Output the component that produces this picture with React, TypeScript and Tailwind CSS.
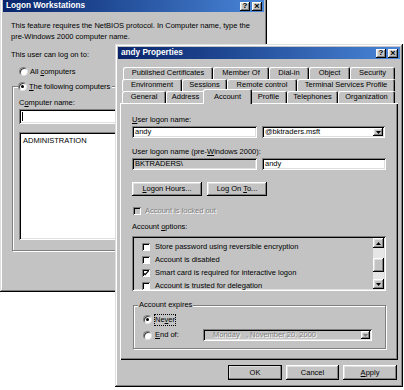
import React from 'react'

const raised = 'bg-[#c3c3c3] shadow-[inset_-1px_-1px_#000,inset_1px_1px_#fff,inset_-2px_-2px_#808080,inset_2px_2px_#dfdfdf]'
const sunken = 'shadow-[inset_1px_1px_#808080,inset_-1px_-1px_#fff,inset_2px_2px_#000,inset_-2px_-2px_#dfdfdf]'
const frame = 'bg-[#c3c3c3] shadow-[inset_-1px_-1px_#000,inset_1px_1px_#dfdfdf,inset_-2px_-2px_#808080,inset_2px_2px_#fff]'
const etched = 'border border-[#808080] shadow-[1px_1px_#fff,inset_1px_1px_#fff]'

const TitleBar = ({ title }: { title: string }) => (
    <div className="flex h-[12px] items-center bg-linear-to-r from-[#0a246a] to-[#4a86d8] pl-[3px] pr-[2px]">
        <span className="flex-1 text-[8.2px] font-bold leading-none text-white">{title}</span>
        <span className={`flex h-[9px] w-[10px] items-center justify-center text-[8px] font-bold leading-none text-black ${raised}`}>?</span>
        <span className={`ml-[2px] flex h-[9px] w-[10px] items-center justify-center text-[9px] font-bold leading-none text-black ${raised}`}>×</span>
    </div>
)

const Radio = ({ checked }: { checked?: boolean }) => (
    <span className="relative inline-block h-[9px] w-[9px] shrink-0 rounded-full border border-t-[#808080] border-l-[#808080] border-r-[#dfdfdf] border-b-[#dfdfdf] bg-white shadow-[inset_1px_1px_#404040]">
        {checked && <span className="absolute left-[2px] top-[2px] h-[3px] w-[3px] rounded-full bg-black" />}
    </span>
)

const Check = ({ checked, disabled }: { checked?: boolean; disabled?: boolean }) => (
    <span
        className={`flex h-[8px] w-[8px] shrink-0 items-center justify-center shadow-[inset_1px_1px_#808080,inset_-1px_-1px_#fff,inset_2px_2px_#000] ${disabled ? 'bg-[#c3c3c3]' : 'bg-white'}`}
    >
        {checked && (
            <svg width="6" height="6" viewBox="0 0 7 7">
                <path d="M0.5 3.5 L2.5 5.5 L6.5 1" stroke="#000" strokeWidth="1.4" fill="none" />
            </svg>
        )}
    </span>
)

const Arrow = ({ up }: { up?: boolean }) => (
    <svg width="5" height="3" viewBox="0 0 5 3">
        <path d={up ? 'M2.5 0 L5 3 L0 3 Z' : 'M0 0 L5 0 L2.5 3 Z'} fill="#000" />
    </svg>
)

const Tab = ({ label, w }: { label: React.ReactNode; w: string }) => (
    <div className={`flex h-[12px] items-center justify-center rounded-t-[2px] shadow-[inset_1px_1px_#fff,inset_-1px_0_#000,inset_-2px_0_#808080] ${w}`}>
        {label}
    </div>
)

const Btn = ({ children, w, def }: { children: React.ReactNode; w: string; def?: boolean }) => (
    <div className={`flex h-full items-center justify-center ${w} ${raised} ${def ? 'outline outline-1 outline-black -outline-offset-1' : ''}`}>
        {children}
    </div>
)

const LogonWorkstations = () => (
    <div className={`absolute left-0 top-[-3px] h-[295px] w-[267px] p-[3px] ${frame}`}>
        <TitleBar title="Logon Workstations" />
        <div className="pl-[8px] leading-[11px]">
            <p className="mt-[8px] whitespace-nowrap">
                This feature requires the NetBIOS protocol. In Computer name, type the
                <br />
                pre-Windows 2000 computer name.
            </p>
            <p className="mt-[7px]">This user can log on to:</p>
            <div className="mt-[6px] flex h-[11px] items-center gap-[2px] pl-[8px]">
                <Radio />
                <span>
                    All <u>c</u>omputers
                </span>
            </div>
            <div className={`relative ml-[1px] mt-[9px] h-[165px] w-[240px] pl-[6px] pt-[10px] ${etched}`}>
                <div className="absolute left-[5px] top-[-6px] flex h-[11px] items-center gap-[2px] bg-[#c3c3c3] pr-[2px]">
                    <Radio checked />
                    <span>
                        <u>T</u>he following computers
                    </span>
                </div>
                <p>
                    C<u>o</u>mputer name:
                </p>
                <div className={`mt-[1px] flex h-[15px] w-[220px] items-center bg-white pl-[3px] ${sunken}`}>
                    <span className="h-[9px] w-px bg-black" />
                </div>
                <div className={`mt-[8px] h-[108px] w-[220px] bg-white pl-[4px] pt-[3px] ${sunken}`}>ADMINISTRATION</div>
            </div>
        </div>
    </div>
)

const options = [
    { label: 'Store password using reversible encryption', checked: false },
    { label: 'Account is disabled', checked: false },
    { label: 'Smart card is required for interactive logon', checked: true },
    { label: 'Account is trusted for delegation', checked: false },
]

const AndyProperties = () => (
    <div className={`absolute left-[115px] top-[44px] flex h-[343px] w-[288px] flex-col p-[3px] ${frame}`}>
        <TitleBar title="andy Properties" />

        {/* tab rows */}
        <div className="mt-[8px] flex pl-[5px]">
            <Tab w="w-[90px]" label="Published Certificates" />
            <Tab w="w-[56px]" label="Member Of" />
            <Tab w="w-[40px]" label="Dial-in" />
            <Tab w="w-[41px]" label="Object" />
            <Tab w="w-[45px]" label="Security" />
        </div>
        <div className="flex pl-[4px]">
            <Tab w="w-[60px]" label="Environment" />
            <Tab w="w-[45px]" label="Sessions" />
            <Tab w="w-[70px]" label="Remote control" />
            <Tab w="w-[98px]" label="Terminal Services Profile" />
        </div>
        <div className="flex h-[12px] items-start pl-[4px]">
            <Tab w="w-[44px]" label="General" />
            <Tab w="w-[39px]" label="Address" />
            <div className="relative z-10 -mx-[2px] -mt-[2px] flex h-[15px] w-[49px] items-start justify-center rounded-t-[2px] bg-[#c3c3c3] pt-[2px] shadow-[inset_1px_1px_#fff,inset_-1px_0_#000,inset_-2px_0_#808080]">
                Account
            </div>
            <Tab w="w-[37px]" label="Profile" />
            <Tab w="w-[51px]" label="Telephones" />
            <Tab w="w-[57px]" label="Organization" />
        </div>

        {/* account page */}
        <div className="ml-[2px] flex h-[257px] w-[278px] flex-col px-[12px] pt-[12px] leading-[10px] shadow-[inset_1px_1px_#fff,inset_-1px_-1px_#000,inset_-2px_-2px_#808080]">
            <p>
                <u>U</u>ser logon name:
            </p>
            <div className="mt-[1px] flex h-[12px] gap-[5px]">
                <div className={`flex w-[125px] items-center bg-white pl-[3px] ${sunken}`}>andy</div>
                <div className={`flex w-[123px] items-center bg-white pl-[3px] pr-[2px] ${sunken}`}>
                    <span className="flex-1">@bktraders.msft</span>
                    <span className={`flex h-[8px] w-[10px] items-center justify-center ${raised}`}>
                        <Arrow />
                    </span>
                </div>
            </div>
            <p className="mt-[9px]">
                User logon name (pre-<u>W</u>indows 2000):
            </p>
            <div className="mt-[1px] flex h-[12px] gap-[5px]">
                <div className={`flex w-[125px] items-center bg-[#c3c3c3] pl-[3px] ${sunken}`}>BKTRADERS\</div>
                <div className={`flex w-[124px] items-center bg-white pl-[3px] ${sunken}`}>andy</div>
            </div>
            <div className="mt-[12px] flex h-[14px] gap-[5px]">
                <Btn w="w-[70px]">
                    <span>
                        <u>L</u>ogon Hours...
                    </span>
                </Btn>
                <Btn w="w-[60px]">
                    <span>
                        Log On <u>T</u>o...
                    </span>
                </Btn>
            </div>
            <div className="mt-[10px] flex h-[10px] items-center gap-[4px] pl-[1px]">
                <Check disabled />
                <span className="text-[#808080] [text-shadow:1px_1px_#fff]">Account is locked out</span>
            </div>
            <p className="mt-[6px]">
                Account <u>o</u>ptions:
            </p>
            <div className={`mt-[4px] flex h-[55px] w-[254px] bg-[#c3c3c3] p-[2px] ${sunken}`}>
                <div className="flex flex-1 flex-col gap-[3px] pl-[8px] pt-[4px]">
                    {options.map((o) => (
                        <div key={o.label} className="flex h-[10px] items-center gap-[5px]">
                            <Check checked={o.checked} />
                            <span>{o.label}</span>
                        </div>
                    ))}
                </div>
                <div className="flex w-[11px] flex-col">
                    <span className={`flex h-[10px] items-center justify-center ${raised}`}>
                        <Arrow up />
                    </span>
                    <span className="h-[10px] bg-[#e6e6e6]" />
                    <span className={`h-[14px] ${raised}`} />
                    <span className="flex-1 bg-[#e6e6e6]" />
                    <span className={`flex h-[10px] items-center justify-center ${raised}`}>
                        <Arrow />
                    </span>
                </div>
            </div>
            <div className={`relative ml-[1px] mt-[14px] h-[44px] w-[253px] pl-[9px] pt-[8px] ${etched}`}>
                <span className="absolute left-[4px] top-[-6px] bg-[#c3c3c3] px-[1px]">Account expires</span>
                <div className="flex h-[11px] items-center gap-[3px]">
                    <Radio checked />
                    <span className="outline outline-1 outline-dotted outline-black">
                        Ne<u>v</u>er
                    </span>
                </div>
                <div className="mt-[4px] flex h-[12px] items-center">
                    <div className="flex w-[60px] items-center gap-[3px]">
                        <Radio />
                        <span>
                            <u>E</u>nd of:
                        </span>
                    </div>
                    <div className={`flex h-[12px] w-[169px] items-center bg-[#c3c3c3] pl-[10px] pr-[2px] ${sunken}`}>
                        <span className="flex-1 text-[#808080] [text-shadow:1px_1px_#fff]">Monday &nbsp;&nbsp;, November 20, 2000</span>
                        <span className={`flex h-[8px] w-[9px] items-center justify-center ${raised}`}>
                            <svg width="5" height="3" viewBox="0 0 5 3">
                                <path d="M0 0 L5 0 L2.5 3 Z" fill="#808080" />
                            </svg>
                        </span>
                    </div>
                </div>
            </div>
        </div>

        {/* dialog buttons */}
        <div className="mt-[5px] flex h-[15px] justify-end gap-[4px] pr-[3px]">
            <Btn w="w-[54px]" def>
                OK
            </Btn>
            <Btn w="w-[53px]">Cancel</Btn>
            <Btn w="w-[54px]">
                <span>
                    <u>A</u>pply
                </span>
            </Btn>
        </div>
    </div>
)

export default function App() {
    return (
        <div className="relative h-[390px] w-[404px] overflow-hidden bg-white font-['Liberation_Sans',Arial,sans-serif] text-[7.5px] text-black">
            <LogonWorkstations />
            <AndyProperties />
        </div>
    )
}
